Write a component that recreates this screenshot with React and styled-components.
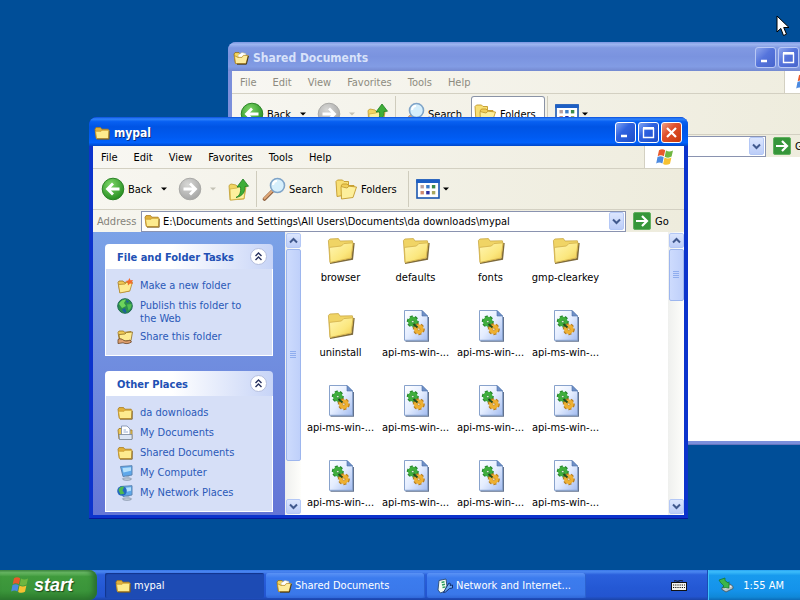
import React, { useId } from 'react';
import styled, { createGlobalStyle, css } from 'styled-components';

const GlobalStyle = createGlobalStyle`
  * { box-sizing: border-box; }
  body { margin: 0; overflow: hidden; }
  body, button, input {
    font-family: "DejaVu Sans Condensed", "DejaVu Sans", Tahoma, sans-serif;
    font-size: 11px;
    line-height: 13px;
  }
  button { border: 0; padding: 0; margin: 0; background: none; color: inherit; }
  svg { display: block; flex: none; }
`;

/* ---------- icons ---------- */

const Folder = ({ size = 16 }) => (
  <svg width={size} height={size} viewBox="0 0 16 16">
    <path d="M1 4.2 2 2.6h4.6l1.2 1.6h6.4v9H2.2z" fill="#e2b23c" stroke="#a87a1c" strokeWidth=".8" />
    <path d="M1.5 6.2h5.6l1-1h7L14.4 13.6H2.6z" fill="#fdeb8e" stroke="#c8982c" strokeWidth=".8" />
    <path d="M15.2 6v8.2H3" fill="none" stroke="#7b5c1c" strokeWidth=".9" />
  </svg>
);

const OpenFolder = () => (
  <svg width="16" height="16" viewBox="0 0 16 16">
    <path d="M1 4 2 2.6h4l1 1.2h5v9.4H2.4z" fill="#f6d65c" stroke="#8c6a18" strokeWidth=".8" />
    <path d="m5 5 4-2.6 4 1.2-.4 6L6 12z" fill="#fff" stroke="#b9b9a8" strokeWidth=".6" />
    <path d="M1.4 5.6 5 7.4h4l1.4-2h4.8L13 13.6H2.6z" fill="#fdeb9c" stroke="#b98b22" strokeWidth=".8" />
    <path d="m15.4 6-2 8.2H4" fill="none" stroke="#4c3c14" />
  </svg>
);

const BigFolder = () => (
  <svg width="32" height="32" viewBox="0 0 32 32">
    <defs>
      <linearGradient id="bf" x1="0" y1="0" x2="1" y2="1">
        <stop offset="0" stopColor="#fff6b4" />
        <stop offset=".6" stopColor="#fbe77e" />
        <stop offset="1" stopColor="#eec84c" />
      </linearGradient>
    </defs>
    <path d="m5 28.200 22.200-4.200L28.800 8" fill="none" stroke="#7d6a3c" strokeWidth="1.800" />
    <path d="M3.400 5.600 4.800 4l8.600-.4L15 6l12.400-.2.6 3.400L25.600 23 5 27.400z" fill="#f0d465" stroke="#c9a744" strokeWidth=".8" />
    <path d="M4.400 12.400 16.400 11l2.400-2.400 9.200-.8-1.800 15.200-21 4.400z" fill="url(#bf)" stroke="#d2b04a" strokeWidth=".8" />
  </svg>
);

const Gear = ({ x, y, r, fill, edge }) => (
  <g transform={`translate(${x} ${y})`}>
    <circle r={r} fill="none" stroke={edge} strokeWidth="4" strokeDasharray="2.4 1.600" />
    <circle r={r} fill={fill} stroke={fill} strokeWidth="1.600" />
    <circle r={r * 0.3} fill="#eef2e4" stroke={edge} strokeWidth=".7" />
  </g>
);

const DllFile = () => (
  <svg width="32" height="32" viewBox="0 0 32 32">
    <defs>
      <linearGradient id="dl" x1="0" y1="0" x2="1" y2="1">
        <stop offset="0" stopColor="#ffffff" />
        <stop offset=".5" stopColor="#e4edff" />
        <stop offset="1" stopColor="#a3bcf0" />
      </linearGradient>
    </defs>
    <path d="M5.500 31h22.800V7" fill="none" stroke="#62728f" strokeWidth="1.400" />
    <path d="M4.500.5H22l5.500 5.500v24.300h-23z" fill="url(#dl)" stroke="#88a2cc" />
    <path d="M22 .5V6h5.500z" fill="#6f90c8" stroke="#4c70aa" strokeWidth=".6" />
    <Gear x={12.800} y={11.600} r={4} fill="#3fae3c" edge="#26862c" />
    <Gear x={18.800} y={19.200} r={4} fill="#eeb031" edge="#b67c1c" />
    <path d="m13.500 14 4 3.500" stroke="#234c22" strokeWidth="2" />
  </svg>
);

const Flag = ({ size = 20 }) => (
  <svg width={size} height={size} viewBox="0 0 20 20">
    <path d="M4 3.200C6.200 1.800 8.200 2 10.200 3.200L8.900 9.300C6.900 8.100 4.900 8 2.700 9.200z" fill="#e8592b" />
    <path d="M11 3.600c2.200 1.200 4.400 1.300 7-.2l-1.400 6.200c-2.400 1.400-4.700 1.300-6.900.1z" fill="#6fb640" />
    <path d="M2.500 10.100c2.200-1.300 4.200-1.100 6.200.1L7.400 16.400C5.400 15.200 3.400 15.100 1.200 16.400z" fill="#4c8ae0" />
    <path d="M9.500 10.600c2.200 1.200 4.500 1.300 6.900-.1L15 16.800c-2.400 1.400-4.700 1.300-6.900.1z" fill="#f6c132" />
  </svg>
);

const RoundArrow = ({ forward }) => (
  <svg width="24" height="24" viewBox="0 0 24 24">
    <defs>
      <radialGradient id={forward ? 'rf' : 'rb'} cx=".4" cy=".3" r=".75">
        <stop offset="0" stopColor={forward ? '#d8d8d6' : '#7fd768'} />
        <stop offset="1" stopColor={forward ? '#a3a3a2' : '#218a1e'} />
      </radialGradient>
    </defs>
    <circle cx="12" cy="12" r="10.800" fill={`url(#${forward ? 'rf' : 'rb'})`} stroke={forward ? '#a9a9a6' : '#2c8427'} />
    <path
      d={forward ? 'M5.500 12h12M12 6.500l5.500 5.500-5.500 5.500' : 'M18.500 12h-12M12 6.500 6.500 12l5.500 5.500'}
      fill="none" stroke="#fff" strokeWidth="2.800"
    />
  </svg>
);

const UpFolder = () => (
  <svg width="24" height="24" viewBox="0 0 24 24">
    <path d="M3 8.500 5 7l5 1 1.500 1.500L19 8l1 2-2 12L4 23z" fill="#f2d562" stroke="#bd9a2e" strokeWidth=".8" />
    <path d="m4 12 7-1 2-1.500 6.500-1L18 21.500 4.500 23z" fill="#fdf09c" stroke="#cdaa3c" strokeWidth=".7" />
    <path d="M10 20.500c4-2 5-5.500 4.500-10.500H11l6-8 5.500 7.200-3.600.300C19 15 17 19 10 20.500z" fill="#3eae38" stroke="#1c7c20" strokeWidth=".8" />
  </svg>
);

const Magnifier = () => (
  <svg width="24" height="24" viewBox="0 0 24 24">
    <path d="m2.500 22 8-8" stroke="#8b5d3c" strokeWidth="3.600" strokeLinecap="round" />
    <path d="m2.500 21.500 8-8" stroke="#e0a878" strokeWidth="2.200" strokeLinecap="round" />
    <circle cx="15.500" cy="8.500" r="7" fill="#d6effc" stroke="#7fa4c8" strokeWidth="1.600" />
    <path d="M11 8a4.800 4.800 0 0 1 4-4.200" fill="none" stroke="#fff" strokeWidth="2" />
  </svg>
);

const FoldersPair = () => (
  <svg width="24" height="24" viewBox="0 0 24 24">
    <path d="M2 4.500 3.500 3h5L10 4.500h4.500v13L3 19.500z" fill="#f8df74" stroke="#c39a2a" strokeWidth=".9" />
    <path d="m7 9 1.500-2H13l1.500 1.500H20V12" fill="#f1ce57" stroke="#c39a2a" strokeWidth=".9" />
    <path d="M7 9.500 13 11l2-1.800L22.500 10 19 20.500 7.500 22z" fill="#fdef9b" stroke="#c39a2a" strokeWidth=".9" />
  </svg>
);

const ViewsGrid = () => (
  <svg width="24" height="20" viewBox="0 0 24 20">
    <rect x="1" y="1" width="22" height="18" fill="#fff" stroke="#1b57b0" strokeWidth="1.600" />
    <path d="M.200 2.200h23.600" stroke="#1d5fc4" strokeWidth="3.600" />
    {['#b9a0a0', '#3c7cc8', '#3a8a4a', '#d08a70', '#2c30a0', '#a8a860'].map((c, i) => (
      <rect key={c} x={4.500 + (i % 3) * 5.700} y={6 + Math.floor(i / 3) * 6} width="3.400" height="3.400" fill={c} />
    ))}
  </svg>
);

const Go = () => (
  <svg width="18" height="18" viewBox="0 0 18 18">
    <rect x=".5" y=".5" width="17" height="17" rx="1.500" fill="#36963a" stroke="#62b060" />
    <path d="M3 9h11M9 4l5 5-5 5" fill="none" stroke="#fff" strokeWidth="2.200" />
  </svg>
);

const Chevron = ({ up }) => (
  <svg width="9" height="7" viewBox="0 0 9 7">
    <path d={up ? 'M1 5.500 4.500 2 8 5.500' : 'M1 1.500 4.500 5 8 1.500'} fill="none" stroke="#41598e" strokeWidth="2" />
  </svg>
);

const DoubleChevron = () => (
  <svg width="9" height="9" viewBox="0 0 9 9">
    <path d="M1.500 4 4.500 1l3 3M1.500 8l3-3 3 3" fill="none" stroke="#27315e" strokeWidth="1.400" />
  </svg>
);

const Caret = () => (
  <svg width="6" height="4" viewBox="0 0 6 4"><path d="M0 .500h6L3 3.500z" fill="currentColor" /></svg>
);

const NewFolder = () => (
  <svg width="16" height="16" viewBox="0 0 16 16">
    <path d="M1 4.500 2 3h4l1 1.300h5.500V13L3 14.500z" fill="#f0ca55" stroke="#9c7420" strokeWidth=".8" />
    <path d="M1.500 6.500 8 6l1.500-1.500 6-.5-2.700 9L2.800 15z" fill="#fdeb92" stroke="#b4882a" strokeWidth=".8" />
    <path d="m12.500 0 1 2.200L16 2l-1.300 2.200L16 6l-3-.5L11 7.500 10.600 4.600 8.500 3l2.700-.5z" fill="#f26a2a" />
  </svg>
);

const Globe = () => (
  <svg width="16" height="16" viewBox="0 0 16 16">
    <circle cx="8" cy="8" r="7.300" fill="#2c8f4c" stroke="#1d6a54" />
    <path d="M2 6c2-4 5-4.600 7-4.500L7 5 9 8l-4 2z" fill="#6ed45c" />
    <path d="M10 6.500 14.500 6c.5 3-1 5-3 6.500z" fill="#52bd52" />
    <path d="M5 11.500 8 10l1.500 4.500C7.500 15 6 14 5 11.500z" fill="#1c5da0" />
    <path d="m9 2 3 1.500L10 5z" fill="#1c5da0" />
  </svg>
);

const ShareFolder = () => (
  <svg width="16" height="16" viewBox="0 0 16 16">
    <path d="M1 3.500 2 2h4.500l1 1.300L14 2.500 13 11 2.500 12z" fill="#f0ca55" stroke="#9c7420" strokeWidth=".8" />
    <path d="M2 5.500 8 5l1.500-1.500L15.500 3 14 11.500 3 12.500z" fill="#fdeb92" stroke="#8d6b22" strokeWidth=".8" />
    <path d="M1 10.500c2-1.500 4-.5 6 1 2 .800 4 .500 6-.5l1.500 2c-3 2-6 2-8.500.8L1 14.500z" fill="#dfa070" stroke="#6b4424" strokeWidth=".8" />
  </svg>
);

const DocsFolder = () => (
  <svg width="16" height="16" viewBox="0 0 16 16">
    <path d="M1 5 2 3.500h3L6 5h9v9H2z" fill="#ecc755" stroke="#9c7420" strokeWidth=".8" />
    <path d="M4.500 1H10l3 3v8.500H4.500z" fill="#fff" stroke="#7688a8" strokeWidth=".8" />
    <path d="M6.500 5H9M6.500 7h4.500" stroke="#9ab0d4" />
    <path d="M2 9.500h13V14.500H2.500z" fill="#dbe5f4" stroke="#77869a" strokeWidth=".8" />
  </svg>
);

const Computer = ({ globe }) => (
  <svg width="16" height="16" viewBox="0 0 16 16">
    <path d="M5.500 13.800c0-1.200 8-1.200 9 0 0 2-9 2-9 0z" fill="#c5cfdc" stroke="#76879c" strokeWidth=".7" />
    <path d="M9 10h3l.5 3h-3z" fill="#aab8c9" />
    <path d="m3.500 1.500 11.500-.8V10L6 11.500z" fill="#5fa8ea" stroke="#5c86b4" />
    <path d="M5.500 3 14 2.200v3.600L6.500 7.500z" fill="#b4e0fb" />
    {globe && <circle cx="5" cy="6" r="4.800" fill="#2468c0" />}
    {globe && <path d="M1.500 5c1-3.500 4.500-4 5.500-3L5.500 5.500l2 3-4 1z" fill="#4fba4f" />}
  </svg>
);

const NetDoc = () => (
  <svg width="16" height="16" viewBox="0 0 16 16">
    <path d="M2 2.500 9 1l1.500 11-7 3L1 12z" fill="#f3fbf4" stroke="#294a70" strokeWidth=".9" />
    <path d="m4.500 4.500 3-.7M5 7l3-.7M5.500 9.500l3-.6" stroke="#2c9c5c" strokeWidth="1.400" />
    <path d="m9.500 9 2.500-4 1.500.7L13 7.500l2.500-.5v3l-3 .5-4 3.500-2 .5z" fill="#6ea8f4" stroke="#14306e" />
  </svg>
);

const Keyboard = () => (
  <svg width="16" height="16" viewBox="0 0 16 16">
    <path d="M3 4c2-1 3 1 5 0s3 0 4 0" stroke="#111" fill="none" />
    <rect x=".5" y="5.500" width="15" height="8" fill="#f4f4ee" stroke="#111" />
    <path d="M2 8h12M2 10.500h12" stroke="#111" strokeWidth="1.200" strokeDasharray="1.200 1" />
  </svg>
);

const SafeRemove = () => (
  <svg width="16" height="16" viewBox="0 0 16 16">
    <path d="m4 10.500 8-3.500 3 2.500v2l-7 3.500-4-2.500z" fill="#b9c2c6" stroke="#41545c" strokeWidth=".8" />
    <path d="m6.500 12 7-2.800" stroke="#f0f4f4" />
    <path d="M1 3 7 1v2.500l3 2.300 1-1V11L4.500 10.500 6 9 2.500 5.500z" fill="#3cb54a" stroke="#14702c" strokeWidth=".7" />
  </svg>
);

/* ---------- window frame ---------- */

const Desktop = styled.main`
  position: relative;
  display: flex;
  flex-direction: column;
  justify-content: flex-end;
  height: 100vh;
  overflow: hidden;
  background: #004e98;
`;

const frames = {
  shared: css`left: 228px; top: 42px; right: -28px; bottom: 155px;`,
  mypal: css`left: 89px; top: 117px; right: 112px; bottom: 81px;`,
};

const Frame = styled.section`
  position: absolute;
  ${(p) => frames[p.$place]}
  display: flex;
  flex-direction: column;
  padding: 0 4px 4px;
  border-radius: 8px 8px 0 0;
  background: ${(p) => (p.$active ? '#0c34cc' : '#7b8fdb')};
  box-shadow: inset 0 -1px ${(p) => (p.$active ? '#06189c' : '#6676c0')};
  overflow: hidden;
`;

const TitleBar = styled.header`
  flex: none;
  display: flex;
  align-items: center;
  gap: 4px;
  height: 29px;
  margin: 0 -4px;
  padding: 2px 6px 0 5px;
  color: ${(p) => (p.$active ? '#fff' : '#d8e2fa')};
  background: ${(p) => (p.$active
    ? 'linear-gradient(#0a4fdc, #2f83fb 7%, #0860f2 16%, #0054e4 34%, #005bf2 70%, #0162fc 88%, #0047c8)'
    : 'linear-gradient(#7c96e2, #9db5f0 8%, #8199e2 20%, #7a93df 50%, #829ce4 85%, #7489d0)')};
`;

const Title = styled.h1`
  flex: 1;
  margin: 0;
  font-size: 12px;
  line-height: 16px;
  font-weight: 700;
  text-shadow: ${(p) => (p.$active ? '1px 1px #0a2f86' : 'none')};
`;

const frameButton = {
  close: 'linear-gradient(135deg, #f0a088, #e0502c 40%, #c8380c)',
  active: 'linear-gradient(135deg, #7fa4f4, #2f62e0 40%, #1c4cc8)',
  idle: 'linear-gradient(135deg, #8fa6ec, #5574dc 45%, #4765cc)',
};

const FrameButton = styled.button`
  display: grid;
  place-items: center;
  width: 21px;
  height: 21px;
  margin-left: -2px;
  border: 1px solid ${(p) => (p.$tone === 'idle' ? '#b9c8f4' : '#fff')};
  border-radius: 3px;
  background: ${(p) => frameButton[p.$tone]};
`;

const MenuBar = styled.nav`
  flex: none;
  display: flex;
  height: 23px;
  border-bottom: 1px solid #d3d0c2;
  background: linear-gradient(90deg, #f8f7f2, #efeddf);
`;

const MenuItem = styled.button`
  padding: 0 8px;
  color: ${(p) => (p.$active ? '#000' : '#8d8b80')};
`;

const FlagBox = styled.div`
  display: grid;
  place-items: center;
  width: 40px;
  margin-left: auto;
  border-left: 1px solid #d3d0c2;
  background: #fff;
`;

const Toolbar = styled.div`
  flex: none;
  display: flex;
  align-items: center;
  height: 41px;
  padding-left: 8px;
  border-bottom: 1px solid #d3d0c2;
  background: linear-gradient(90deg, #f7f6f0, #eeecdd);
`;

const ToolButton = styled.button`
  display: flex;
  align-items: center;
  gap: 3px;
  height: 36px;
  padding: 0 ${(p) => p.$pad || 0}px;
`;

const FoldersToggle = styled(ToolButton)`
  margin-left: 9px;
  padding: 0 9px 0 2px;
  border-radius: 3px;
  ${(p) => p['aria-pressed'] && css`
    background: #fff;
    box-shadow: inset 0 0 0 1px #8a93a6;
  `}
`;

const DropButton = styled.button`
  display: grid;
  place-items: center;
  width: ${(p) => p.$width}px;
  height: 36px;
  color: ${(p) => (p.$dim ? '#c4c2b6' : '#000')};
`;

const Divider = styled.span`
  width: 1px;
  height: 36px;
  margin: 0 ${(p) => p.$after}px 0 ${(p) => p.$before}px;
  background: #cfccbd;
`;

const AddressBar = styled.form`
  flex: none;
  display: flex;
  align-items: center;
  height: 22px;
  padding-left: 4px;
  background: linear-gradient(90deg, #f6f5ee, #eeecdd);
`;

const AddressLabel = styled.label`
  width: 44px;
  color: #85837a;
`;

const AddressField = styled.div`
  flex: 1;
  display: flex;
  align-items: center;
  gap: 3px;
  height: 21px;
  padding: 0 1px 0 2px;
  border: 1px solid #8a93b0;
  background: #fff;
`;

const AddressInput = styled.input`
  flex: 1;
  min-width: 0;
  padding: 0;
  border: 0;
  outline: 0;
  background: none;
  color: #000;
`;

const BlueButton = styled.button`
  display: grid;
  place-items: center;
  width: 15px;
  height: ${(p) => p.$height || 15}px;
  border: 1px solid #b4c8f6;
  border-radius: 2px;
  background: linear-gradient(#dce6fe, #bccdf8);
`;

const GoButton = styled.button`
  display: flex;
  align-items: center;
  gap: 4px;
  width: 58px;
  padding-left: 7px;
`;

const WindowBody = styled.div`
  flex: 1;
  display: flex;
  min-height: 0;
  overflow: hidden;
  background: #fff;
`;

/* ---------- folder contents ---------- */

const TaskPane = styled.aside`
  flex: none;
  display: flex;
  flex-direction: column;
  gap: 15px;
  width: 192px;
  padding: 12px;
  overflow: hidden;
  background: linear-gradient(#7ba2e7, #6375d6);
`;

const TaskGroup = styled.section`
  flex: none;
`;

const TaskHeader = styled.div`
  display: flex;
  align-items: center;
  justify-content: space-between;
  height: 25px;
  padding: 0 6px 0 12px;
  border-radius: 4px 4px 0 0;
  background: linear-gradient(90deg, #fff 40%, #c7d4f7);
`;

const TaskTitle = styled.h2`
  margin: 2px 0 0;
  font-size: 11px;
  line-height: 13px;
  color: #2150b4;
`;

const Collapse = styled.button`
  display: grid;
  place-items: center;
  width: 17px;
  height: 17px;
  border: 1px solid #b4bede;
  border-radius: 50%;
  background: #fff;
`;

const TaskList = styled.ul`
  display: flex;
  flex-direction: column;
  gap: 4px;
  margin: 0;
  padding: 9px 24px 10px 11px;
  border: solid #fff;
  border-width: 0 1px 1px;
  list-style: none;
  background: #d6dff7;
`;

const TaskLink = styled.a`
  display: flex;
  gap: 7px;
  min-height: 16px;
  color: #2a59b8;
  text-decoration: none;
`;

const TaskText = styled.span`
  padding-top: 1px;
`;

const Scroll = styled.div`
  flex: none;
  display: flex;
  flex-direction: column;
  align-items: center;
  justify-content: space-between;
  width: 16px;
  padding: 1px 0;
  background: linear-gradient(90deg, #eff0ee, #fefefb);
`;

const Track = styled.div`
  flex: 1;
  width: 15px;
  padding: 1px 0;
`;

const Thumb = styled.div`
  display: grid;
  place-items: center;
  height: ${(p) => p.$share}%;
  border: 1px solid #9db6ee;
  border-radius: 2px;
  background: linear-gradient(90deg, #cddbfd, #bfd0fa);
`;

const Files = styled.div`
  flex: 1;
  display: grid;
  grid-template-columns: repeat(auto-fill, 75px);
  grid-auto-rows: 75px;
  align-content: start;
  min-width: 0;
  padding-left: 2px;
  overflow: hidden;
`;

const FileItem = styled.button`
  display: flex;
  flex-direction: column;
  align-items: center;
  gap: 4px;
  padding-top: 3px;
  color: #000;
  white-space: nowrap;
`;

/* ---------- taskbar ---------- */

const Taskbar = styled.footer`
  display: flex;
  height: 30px;
  background: linear-gradient(#3a78e8, #4a86f0 6%, #2a60dc 16%, #2458d4 60%, #2355d0 88%, #1b44a8);
`;

const Start = styled.button`
  display: flex;
  align-items: center;
  gap: 4px;
  width: 97px;
  padding: 0 0 0 10px;
  border-radius: 0 8px 8px 0;
  color: #fff;
  font: italic bold 18px/22px "Liberation Sans", Arial, sans-serif;
  text-shadow: 1px 1px 1px #1d4a1a;
  background: linear-gradient(#4f9a4c, #6fbe6a 8%, #3f9a3c 22%, #3a943a 70%, #2c7a2c);
  box-shadow: inset -4px 0 5px #2a7030;
`;

const Tasks = styled.div`
  flex: 1;
  display: flex;
  gap: 2px;
  padding: 3px 0 2px 8px;
`;

const TaskButton = styled.button`
  flex: 0 1 159px;
  display: flex;
  align-items: center;
  gap: 3px;
  padding: 0 10px;
  border-radius: 2px;
  color: #fff;
  white-space: nowrap;
  background: ${(p) => (p.$active ? '#1d4bb4' : 'linear-gradient(#5a92f6, #3c7cee 20%, #3a78ea 85%, #3068d8)')};
  box-shadow: ${(p) => (p.$active ? 'inset 1px 1px 1px #12358c' : 'inset -1px 0 #2c62d0')};
`;

const Language = styled.button`
  display: grid;
  place-items: center;
  width: 56px;
`;

const Tray = styled.div`
  display: flex;
  align-items: center;
  gap: 9px;
  padding: 0 16px 0 10px;
  border-left: 1px solid #1a4cb4;
  color: #fff;
  background: linear-gradient(#2aa4f4, #3cbcfa 6%, #189aee 18%, #1492ea 70%, #1088d8 90%, #0c6cb8);
  box-shadow: inset 1px 0 #40c0fa;
`;

const Pointer = styled.div`
  position: absolute;
  left: 776px;
  top: 15px;
`;

const menus = ['File', 'Edit', 'View', 'Favorites', 'Tools', 'Help'];

const folderTasks = [
  [NewFolder, 'Make a new folder'],
  [Globe, 'Publish this folder to the Web'],
  [ShareFolder, 'Share this folder'],
];

const NetworkPlaces = () => <Computer globe />;

const places = [
  [Folder, 'da downloads'],
  [DocsFolder, 'My Documents'],
  [Folder, 'Shared Documents'],
  [Computer, 'My Computer'],
  [NetworkPlaces, 'My Network Places'],
];

const folders = ['browser', 'defaults', 'fonts', 'gmp-clearkey', 'uninstall'];
const libraries = Array.from({ length: 11 }, () => 'api-ms-win-...');

function ExplorerWindow({ place, title, icon, active, address, foldersOpen, children }) {
  const id = useId();
  const tone = active ? 'active' : 'idle';
  return (
    <Frame $place={place} $active={active} aria-label={title}>
      <TitleBar $active={active}>
        {icon}
        <Title $active={active}>{title}</Title>
        <FrameButton $tone={tone} aria-label="Minimize">
          <svg width="13" height="13" viewBox="0 0 13 13"><path d="M2 10h6" stroke="#fff" strokeWidth="2.600" /></svg>
        </FrameButton>
        <FrameButton $tone={tone} aria-label="Maximize">
          <svg width="13" height="13" viewBox="0 0 13 13"><path d="M1.500 2v9.500h10V2M1 2.500h11" fill="none" stroke="#fff" strokeWidth="1.400" /><path d="M1 2.200h11" stroke="#fff" strokeWidth="2.600" /></svg>
        </FrameButton>
        <FrameButton $tone={active ? 'close' : 'idle'} aria-label="Close">
          <svg width="13" height="13" viewBox="0 0 13 13"><path d="m2 2 9 9M11 2l-9 9" stroke="#fff" strokeWidth="2.200" /></svg>
        </FrameButton>
      </TitleBar>
      <MenuBar>
        {menus.map((m) => <MenuItem key={m} $active={active}>{m}</MenuItem>)}
        <FlagBox><Flag /></FlagBox>
      </MenuBar>
      <Toolbar>
        <ToolButton><RoundArrow />Back</ToolButton>
        <DropButton $width={23} aria-label="Back history"><Caret /></DropButton>
        <ToolButton $pad={3} aria-label="Forward"><RoundArrow forward /></ToolButton>
        <DropButton $width={16} $dim aria-label="Forward history"><Caret /></DropButton>
        <ToolButton $pad={5} aria-label="Up"><UpFolder /></ToolButton>
        <Divider $before={1} $after={5} />
        <ToolButton><Magnifier />Search</ToolButton>
        <FoldersToggle aria-pressed={!!foldersOpen}><FoldersPair />Folders</FoldersToggle>
        <Divider $before={2} $after={7} />
        <ToolButton aria-label="Views"><ViewsGrid /><Caret /></ToolButton>
      </Toolbar>
      <AddressBar onSubmit={(e) => e.preventDefault()}>
        <AddressLabel htmlFor={id}>Address</AddressLabel>
        <AddressField>
          <Folder />
          <AddressInput id={id} defaultValue={address} />
          <BlueButton type="button" $height={18} aria-label="Address history"><Chevron /></BlueButton>
        </AddressField>
        <GoButton><Go />Go</GoButton>
      </AddressBar>
      <WindowBody>{children}</WindowBody>
    </Frame>
  );
}

function TaskSection({ title, items }) {
  return (
    <TaskGroup>
      <TaskHeader>
        <TaskTitle>{title}</TaskTitle>
        <Collapse aria-label={`Collapse ${title}`}><DoubleChevron /></Collapse>
      </TaskHeader>
      <TaskList>
        {items.map(([Icon, label]) => (
          <li key={label}><TaskLink href="#"><Icon /><TaskText>{label}</TaskText></TaskLink></li>
        ))}
      </TaskList>
    </TaskGroup>
  );
}

function ScrollBar({ share }) {
  return (
    <Scroll>
      <BlueButton aria-label="Scroll up"><Chevron up /></BlueButton>
      <Track>
        <Thumb $share={share}>
          <svg width="7" height="8" viewBox="0 0 7 8"><path d="M0 .500h6M0 2.500h6M0 4.500h6M0 6.500h6" stroke="#8fadee" /></svg>
        </Thumb>
      </Track>
      <BlueButton aria-label="Scroll down"><Chevron /></BlueButton>
    </Scroll>
  );
}

export default function App() {
  return (
    <Desktop>
      <GlobalStyle />
      <ExplorerWindow place="shared" title="Shared Documents" icon={<OpenFolder />} address="" foldersOpen />
      <ExplorerWindow
        place="mypal" title="mypal" icon={<Folder />} active
        address="E:\Documents and Settings\All Users\Documents\da downloads\mypal"
      >
        <TaskPane>
          <TaskSection title="File and Folder Tasks" items={folderTasks} />
          <TaskSection title="Other Places" items={places} />
        </TaskPane>
        <ScrollBar share={85} />
        <Files>
          {folders.map((name) => <FileItem key={name}><BigFolder />{name}</FileItem>)}
          {libraries.map((name, i) => <FileItem key={i}><DllFile />{name}</FileItem>)}
        </Files>
        <ScrollBar share={21} />
      </ExplorerWindow>
      <Taskbar>
        <Start><Flag />start</Start>
        <Tasks>
          <TaskButton $active><Folder />mypal</TaskButton>
          <TaskButton><OpenFolder />Shared Documents</TaskButton>
          <TaskButton><NetDoc />Network and Internet...</TaskButton>
        </Tasks>
        <Language aria-label="Keyboard layout"><Keyboard /></Language>
        <Tray><SafeRemove /><time>1:55 AM</time></Tray>
      </Taskbar>
      <Pointer>
        <svg width="14" height="22" viewBox="0 0 14 22">
          <path d="M1 1v16l3.800-3.600L7.500 20.500l3-1.300L7.700 12.500H13z" fill="#fff" stroke="#000" />
        </svg>
      </Pointer>
    </Desktop>
  );
}
